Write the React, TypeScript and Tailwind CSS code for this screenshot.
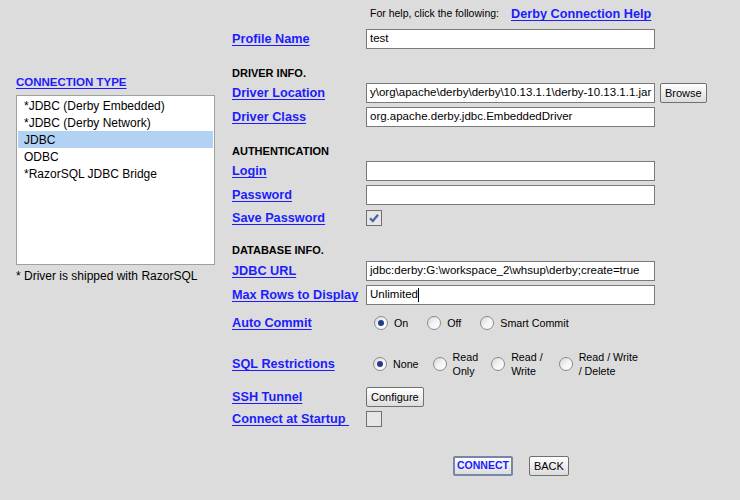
import React from "react"

const font = { fontFamily: '"Liberation Sans", Arial, sans-serif' }

function Label({ children }: { children: React.ReactNode }) {
  return (
    <div className="w-[134px] shrink-0 pt-[2px] text-[12.7px] font-bold text-[#1c1cff] underline underline-offset-2 whitespace-pre">
      {children}
    </div>
  )
}

function Field({ value, caret }: { value?: string; caret?: boolean }) {
  return (
    <div className="w-[289px] h-[20px] bg-white border border-[#7a7a7a] flex items-center pl-[3px] overflow-hidden whitespace-nowrap text-[11.5px] text-black">
      {value}
      {caret && <span className="inline-block w-px h-[14px] bg-black" />}
    </div>
  )
}

function Header({ children }: { children: React.ReactNode }) {
  return <div className="h-[16px] flex items-center text-[11px] font-bold text-black">{children}</div>
}

function Radio({ checked }: { checked?: boolean }) {
  return (
    <span className="w-[14px] h-[14px] shrink-0 rounded-full border border-[#8a8a8a] bg-gradient-to-br from-[#d8d8d8] via-[#f4f4f4] to-white flex items-center justify-center">
      {checked && <span className="w-[6px] h-[6px] rounded-full bg-[#243b8c]" />}
    </span>
  )
}

function Check({ checked }: { checked?: boolean }) {
  return (
    <span className="w-[16px] h-[16px] border border-[#707070] bg-[#e6e6e6] flex items-center justify-center">
      {checked && (
        <svg width="12" height="12" viewBox="0 0 12 12">
          <path d="M2 6.2 L4.8 9 L10 2.8" fill="none" stroke="#4a62a8" strokeWidth="2.2" />
        </svg>
      )}
    </span>
  )
}

function Btn({ children, primary }: { children: React.ReactNode; primary?: boolean }) {
  return (
    <button
      className={`h-[20px] rounded-[2px] bg-gradient-to-b from-white to-[#dcdcdc] flex items-center ${
        primary
          ? "px-[2px] border-2 border-[#7686a8] font-bold text-[10.5px] text-[#1c1cff]"
          : "px-[4px] border border-[#707070] text-[11px] text-black"
      }`}
    >
      {children}
    </button>
  )
}

const items = ["*JDBC (Derby Embedded)", "*JDBC (Derby Network)", "JDBC", "ODBC", "*RazorSQL JDBC Bridge"]

export default function App() {
  return (
    <div className="w-[740px] h-[500px] bg-[#dcdcdc] flex overflow-hidden text-black" style={font}>
      <div className="w-[199px] ml-[16px] shrink-0 flex flex-col">
        <div className="mt-[75px] h-[16px] flex items-center text-[11.5px] font-bold text-[#1c1cff] underline underline-offset-2">
          CONNECTION TYPE
        </div>
        <div className="mt-[4px] h-[170px] bg-white border border-[#a0a0a0] p-px">
          {items.map((it, i) => (
            <div
              key={it}
              className={`h-[17px] flex items-center pl-[6px] text-[12px] ${i === 2 ? "bg-[#b2d2f4]" : ""}`}
            >
              {it}
            </div>
          ))}
        </div>
        <div className="mt-[3px] h-[16px] flex items-center text-[12px]">* Driver is shipped with RazorSQL</div>
      </div>

      <div className="ml-[17px] flex flex-col">
        <div className="mt-[4px] h-[20px] flex items-center pl-[138px] gap-[12px]">
          <span className="text-[10.5px]">For help, click the following:</span>
          <span className="pt-[2px] text-[12.7px] font-bold text-[#1c1cff] underline underline-offset-2">Derby Connection Help</span>
        </div>

        <div className="mt-[5px] h-[20px] flex items-center">
          <Label>Profile Name</Label>
          <Field value="test" />
        </div>

        <div className="mt-[16px]">
          <Header>DRIVER INFO.</Header>
        </div>
        <div className="mt-[2px] h-[20px] flex items-center">
          <Label>Driver Location</Label>
          <Field value="y\org\apache\derby\derby\10.13.1.1\derby-10.13.1.1.jar" />
          <div className="ml-[5px]">
            <Btn>Browse</Btn>
          </div>
        </div>
        <div className="mt-[4px] h-[20px] flex items-center">
          <Label>Driver Class</Label>
          <Field value="org.apache.derby.jdbc.EmbeddedDriver" />
        </div>

        <div className="mt-[16px]">
          <Header>AUTHENTICATION</Header>
        </div>
        <div className="mt-[2px] h-[20px] flex items-center">
          <Label>Login</Label>
          <Field />
        </div>
        <div className="mt-[4px] h-[20px] flex items-center">
          <Label>Password</Label>
          <Field />
        </div>
        <div className="mt-[2px] h-[22px] flex items-center">
          <Label>Save Password</Label>
          <Check checked />
        </div>

        <div className="mt-[13px]">
          <Header>DATABASE INFO.</Header>
        </div>
        <div className="mt-[3px] h-[20px] flex items-center">
          <Label>JDBC URL</Label>
          <Field value="jdbc:derby:G:\workspace_2\whsup\derby;create=true" />
        </div>
        <div className="mt-[4px] h-[20px] flex items-center">
          <Label>Max Rows to Display</Label>
          <Field value="Unlimited" caret />
        </div>

        <div className="mt-[8px] h-[20px] flex items-center">
          <Label>Auto Commit</Label>
          <div className="flex items-center pl-[8px] text-[10.7px]">
            <Radio checked />
            <span className="ml-[6px] mr-[19px]">On</span>
            <Radio />
            <span className="ml-[6px] mr-[19px]">Off</span>
            <Radio />
            <span className="ml-[6px]">Smart Commit</span>
          </div>
        </div>

        <div className="mt-[16px] h-[30px] flex items-center">
          <Label>SQL Restrictions</Label>
          <div className="flex items-center pl-[7px] text-[10.7px] leading-[14px]">
            <Radio checked />
            <span className="ml-[6px] mr-[14px]">None</span>
            <Radio />
            <span className="ml-[6px] mr-[13px]">
              Read
              <br />
              Only
            </span>
            <Radio />
            <span className="ml-[6px] mr-[16px]">
              Read /
              <br />
              Write
            </span>
            <Radio />
            <span className="ml-[6px]">
              Read / Write
              <br />/ Delete
            </span>
          </div>
        </div>

        <div className="mt-[8px] h-[20px] flex items-center">
          <Label>SSH Tunnel</Label>
          <Btn>Configure</Btn>
        </div>
        <div className="mt-[2px] h-[20px] flex items-center">
          <Label>{"Connect at Startup\u00a0"}</Label>
          <Check />
        </div>

        <div className="mt-[27px] h-[20px] flex items-center pl-[221px] gap-[16px]">
          <Btn primary>CONNECT</Btn>
          <Btn>BACK</Btn>
        </div>
      </div>
    </div>
  )
}
